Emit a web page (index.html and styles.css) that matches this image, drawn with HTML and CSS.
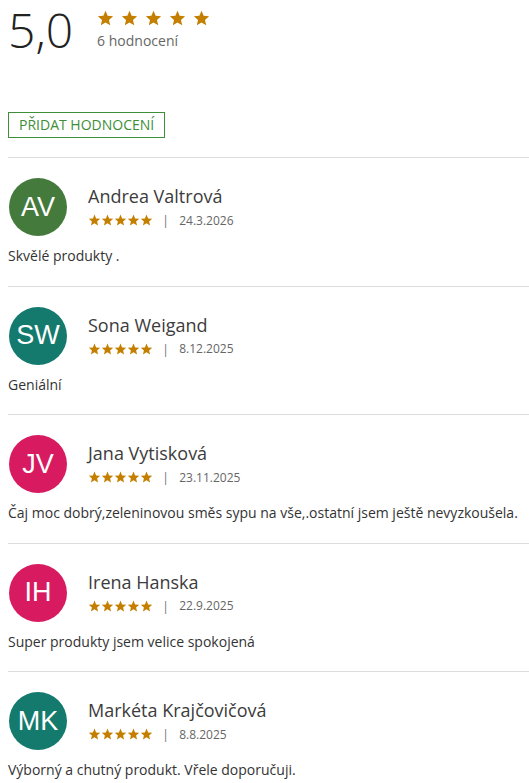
FILE: index.html
```html
<!DOCTYPE html>
<html lang="cs">
<head>
<meta charset="utf-8">
<link rel="stylesheet" href="styles.css">
</head>
<body>
<svg width="0" height="0" class="defs">
  <defs>
    <symbol id="star" viewBox="0 0 24 24"><path d="M12 1.2l3.2 7.6 8.2.7-6.2 5.4 1.9 8-7.1-4.3-7.1 4.3 1.9-8L.6 9.5l8.2-.7z"/></symbol>
  </defs>
</svg>
<div class="summary">
  <div class="score">5,0</div>
  <div class="summary-side">
    <div class="big-stars">
      <svg><use href="#star"/></svg><svg><use href="#star"/></svg><svg><use href="#star"/></svg><svg><use href="#star"/></svg><svg><use href="#star"/></svg>
    </div>
    <div class="count">6 hodnocení</div>
  </div>
</div>
<button class="add-btn">PŘIDAT HODNOCENÍ</button>

<div class="reviews">
  <div class="review">
    <div class="head">
      <div class="avatar green">AV</div>
      <div class="meta">
        <div class="name">Andrea Valtrová</div>
        <div class="line"><span class="stars"><svg><use href="#star"/></svg><svg><use href="#star"/></svg><svg><use href="#star"/></svg><svg><use href="#star"/></svg><svg><use href="#star"/></svg></span><span class="sep">|</span><span class="date">24.3.2026</span></div>
      </div>
    </div>
    <p class="text">Skvělé produkty .</p>
  </div>
  <div class="review">
    <div class="head">
      <div class="avatar teal">SW</div>
      <div class="meta">
        <div class="name">Sona Weigand</div>
        <div class="line"><span class="stars"><svg><use href="#star"/></svg><svg><use href="#star"/></svg><svg><use href="#star"/></svg><svg><use href="#star"/></svg><svg><use href="#star"/></svg></span><span class="sep">|</span><span class="date">8.12.2025</span></div>
      </div>
    </div>
    <p class="text">Geniální</p>
  </div>
  <div class="review">
    <div class="head">
      <div class="avatar pink">JV</div>
      <div class="meta">
        <div class="name">Jana Vytisková</div>
        <div class="line"><span class="stars"><svg><use href="#star"/></svg><svg><use href="#star"/></svg><svg><use href="#star"/></svg><svg><use href="#star"/></svg><svg><use href="#star"/></svg></span><span class="sep">|</span><span class="date">23.11.2025</span></div>
      </div>
    </div>
    <p class="text">Čaj moc dobrý,zeleninovou směs sypu na vše,.ostatní jsem ještě nevyzkoušela.</p>
  </div>
  <div class="review">
    <div class="head">
      <div class="avatar pink">IH</div>
      <div class="meta">
        <div class="name">Irena Hanska</div>
        <div class="line"><span class="stars"><svg><use href="#star"/></svg><svg><use href="#star"/></svg><svg><use href="#star"/></svg><svg><use href="#star"/></svg><svg><use href="#star"/></svg></span><span class="sep">|</span><span class="date">22.9.2025</span></div>
      </div>
    </div>
    <p class="text">Super produkty jsem velice spokojená</p>
  </div>
  <div class="review">
    <div class="head">
      <div class="avatar teal">MK</div>
      <div class="meta">
        <div class="name">Markéta Krajčovičová</div>
        <div class="line"><span class="stars"><svg><use href="#star"/></svg><svg><use href="#star"/></svg><svg><use href="#star"/></svg><svg><use href="#star"/></svg><svg><use href="#star"/></svg></span><span class="sep">|</span><span class="date">8.8.2025</span></div>
      </div>
    </div>
    <p class="text">Výborný a chutný produkt. Vřele doporučuji.</p>
  </div>
</div>
</body>
</html>
```
FILE: styles.css
```css
html, body {
  margin: 0;
  padding: 0;
  background: #fff;
}
body {
  padding-left: 8px;
  font-family: "Open Sans", "Liberation Sans", sans-serif;
  color: #333;
}
.defs {
  position: absolute;
  width: 0;
  height: 0;
}
.summary {
  display: flex;
  align-items: flex-start;
  gap: 24px;
  height: 60px;
}
.score {
  font-size: 48px;
  font-weight: 300;
  line-height: 60px;
  height: 60px;
  color: #222;
}
.summary-side {
  padding-top: 10px;
}
.big-stars {
  display: flex;
  gap: 7px;
  height: 16px;
  fill: #c47f00;
}
.big-stars svg {
  width: 17px;
  height: 16px;
}
.count {
  font-size: 14px;
  color: #666;
  margin-top: 5px;
}
.add-btn {
  display: block;
  margin-top: 52px;
  height: 26px;
  padding: 0 10px;
  background: #fff;
  border: 1px solid #3e8e3a;
  color: #3e8e3a;
  font-family: "Open Sans", "Liberation Sans", sans-serif;
  font-size: 14px;
  line-height: 24px;
}
.reviews {
  margin-top: 19px;
}
.review {
  border-top: 1px solid #dcdcdc;
  padding: 20px 0 0;
  height: 107.5px;
}
.head {
  display: flex;
  align-items: flex-start;
  gap: 21px;
  padding-left: 1px;
}
.avatar {
  width: 58px;
  height: 58px;
  border-radius: 50%;
  display: flex;
  align-items: center;
  justify-content: center;
  color: #fff;
  font-family: "Liberation Sans", Arial, sans-serif;
  font-size: 27px;
  flex-shrink: 0;
}
.green { background: #447a3c; }
.teal { background: #147a6d; }
.pink { background: #d81b60; }
.meta {
  padding-top: 6px;
}
.name {
  font-size: 18px;
  color: #3c3c3c;
  line-height: 25px;
}
.line {
  display: flex;
  align-items: center;
  margin-top: 3px;
  height: 16px;
}
.stars {
  display: flex;
  fill: #c47f00;
}
.stars svg {
  width: 13px;
  height: 12px;
}
.sep {
  font-size: 13px;
  color: #777;
  margin: 0 10px 0 9px;
}
.date {
  font-size: 12px;
  color: #666;
}
.text {
  margin: 10px 0 0;
  font-size: 14px;
  color: #333;
  line-height: 20px;
}
```
